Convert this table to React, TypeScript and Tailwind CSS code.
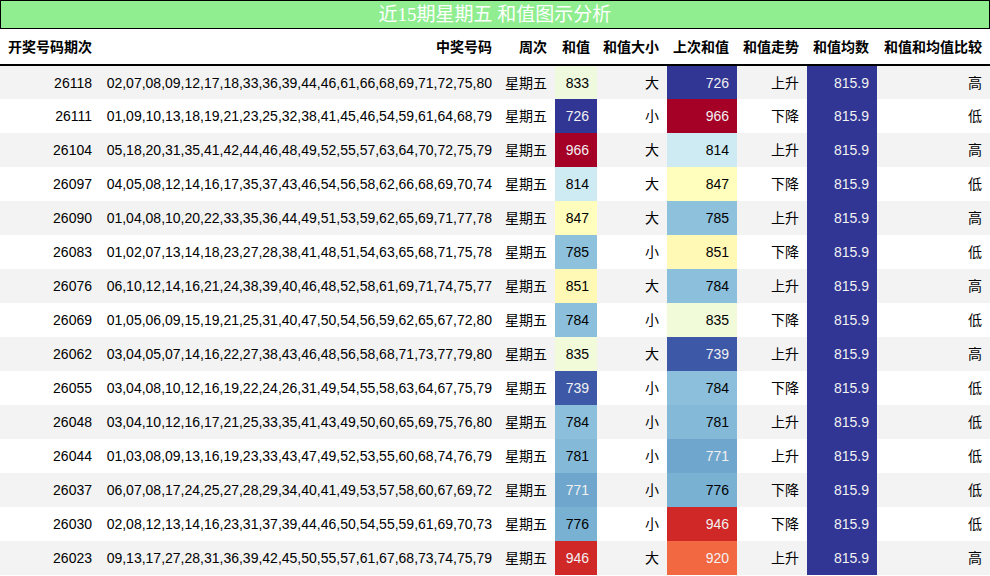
const rows: [string, string, number, string, number, string, string][] = [
	["26118", "02,07,08,09,12,17,18,33,36,39,44,46,61,66,68,69,71,72,75,80", 833, "大", 726, "上升", "高"],
	["26111", "01,09,10,13,18,19,21,23,25,32,38,41,45,46,54,59,61,64,68,79", 726, "小", 966, "下降", "低"],
	["26104", "05,18,20,31,35,41,42,44,46,48,49,52,55,57,63,64,70,72,75,79", 966, "大", 814, "上升", "高"],
	["26097", "04,05,08,12,14,16,17,35,37,43,46,54,56,58,62,66,68,69,70,74", 814, "大", 847, "下降", "低"],
	["26090", "01,04,08,10,20,22,33,35,36,44,49,51,53,59,62,65,69,71,77,78", 847, "大", 785, "上升", "高"],
	["26083", "01,02,07,13,14,18,23,27,28,38,41,48,51,54,63,65,68,71,75,78", 785, "小", 851, "下降", "低"],
	["26076", "06,10,12,14,16,21,24,38,39,40,46,48,52,58,61,69,71,74,75,77", 851, "大", 784, "上升", "高"],
	["26069", "01,05,06,09,15,19,21,25,31,40,47,50,54,56,59,62,65,67,72,80", 784, "小", 835, "下降", "低"],
	["26062", "03,04,05,07,14,16,22,27,38,43,46,48,56,58,68,71,73,77,79,80", 835, "大", 739, "上升", "高"],
	["26055", "03,04,08,10,12,16,19,22,24,26,31,49,54,55,58,63,64,67,75,79", 739, "小", 784, "下降", "低"],
	["26048", "03,04,10,12,16,17,21,25,33,35,41,43,49,50,60,65,69,75,76,80", 784, "小", 781, "上升", "低"],
	["26044", "01,03,08,09,13,16,19,23,33,43,47,49,52,53,55,60,68,74,76,79", 781, "小", 771, "上升", "低"],
	["26037", "06,07,08,17,24,25,27,28,29,34,40,41,49,53,57,58,60,67,69,72", 771, "小", 776, "下降", "低"],
	["26030", "02,08,12,13,14,16,23,31,37,39,44,46,50,54,55,59,61,69,70,73", 776, "小", 946, "下降", "低"],
	["26023", "09,13,17,27,28,31,36,39,42,45,50,55,57,61,67,68,73,74,75,79", 946, "大", 920, "上升", "高"],
];

// RdYlBu reversed
const stops = [
	"#313695", "#4575b4", "#74add1", "#abd9e9", "#e0f3f8", "#ffffbf",
	"#fee090", "#fdae61", "#f46d43", "#d73027", "#a50026",
];

function hex(h: string) {
	return [1, 3, 5].map((i) => parseInt(h.slice(i, i + 2), 16));
}

function heat(v: number, lo = 726, hi = 966) {
	const t = Math.max(0, Math.min(1, (v - lo) / (hi - lo))) * 10;
	const i = Math.min(9, Math.floor(t));
	const f = t - i;
	const a = hex(stops[i]);
	const b = hex(stops[i + 1]);
	const c = a.map((x, k) => Math.round(x + (b[k] - x) * f));
	const lum = (0.299 * c[0] + 0.587 * c[1] + 0.114 * c[2]) / 255;
	return { bg: `rgb(${c.join(",")})`, fg: lum < 0.62 ? "#f1f1f1" : "#000000" };
}

const font = { fontFamily: '"Liberation Sans", Arial, "Noto Sans CJK SC", sans-serif' };

export default function App() {
	return (
		<div className="w-[990px] h-[576px] overflow-hidden bg-white text-black" style={font}>
			<div
				className="h-[29px] border border-black bg-[#90ee90] flex items-center justify-center text-white text-[19px] leading-none"
				style={{ fontFamily: '"Liberation Serif", "Noto Sans CJK SC", serif' }}
			>
				近15期星期五 和值图示分析
			</div>
			<table className="table-fixed border-collapse w-[990px] text-[14px] leading-none">
				<colgroup>
					<col className="w-[100px]" />
					<col className="w-[400px]" />
					<col className="w-[55px]" />
					<col className="w-[42px]" />
					<col className="w-[70px]" />
					<col className="w-[70px]" />
					<col className="w-[70px]" />
					<col className="w-[70px]" />
					<col className="w-[113px]" />
				</colgroup>
				<thead>
					<tr className="h-[36px] border-b-2 border-black font-bold">
						<th className="text-left pl-2">开奖号码期次</th>
						<th className="text-right pr-2">中奖号码</th>
						<th className="text-right pr-2">周次</th>
						<th className="text-right pr-[7px]">和值</th>
						<th className="text-right pr-2">和值大小</th>
						<th className="text-right pr-2">上次和值</th>
						<th className="text-right pr-2">和值走势</th>
						<th className="text-right pr-2">和值均数</th>
						<th className="text-right pr-2">和值和均值比较</th>
					</tr>
				</thead>
				<tbody>
					{rows.map(([no, nums, sum, size, prev, trend, cmp], i) => {
						const s = heat(sum);
						const p = heat(prev);
						const m = heat(815.9, 815.9, 900);
						return (
							<tr key={no} className={i % 2 === 0 ? "h-[34px] bg-[#f3f3f3]" : "h-[34px] bg-white"}>
								<td className="text-right pr-2">{no}</td>
								<td className="text-right pr-2">{nums}</td>
								<td className="text-right pr-2">星期五</td>
								<td className="text-right pr-2" style={{ background: s.bg, color: s.fg }}>
									{sum}
								</td>
								<td className="text-right pr-2">{size}</td>
								<td className="text-right pr-2" style={{ background: p.bg, color: p.fg }}>
									{prev}
								</td>
								<td className="text-right pr-2">{trend}</td>
								<td className="text-right pr-2" style={{ background: m.bg, color: m.fg }}>
									815.9
								</td>
								<td className="text-right pr-2">{cmp}</td>
							</tr>
						);
					})}
				</tbody>
			</table>
		</div>
	);
}
